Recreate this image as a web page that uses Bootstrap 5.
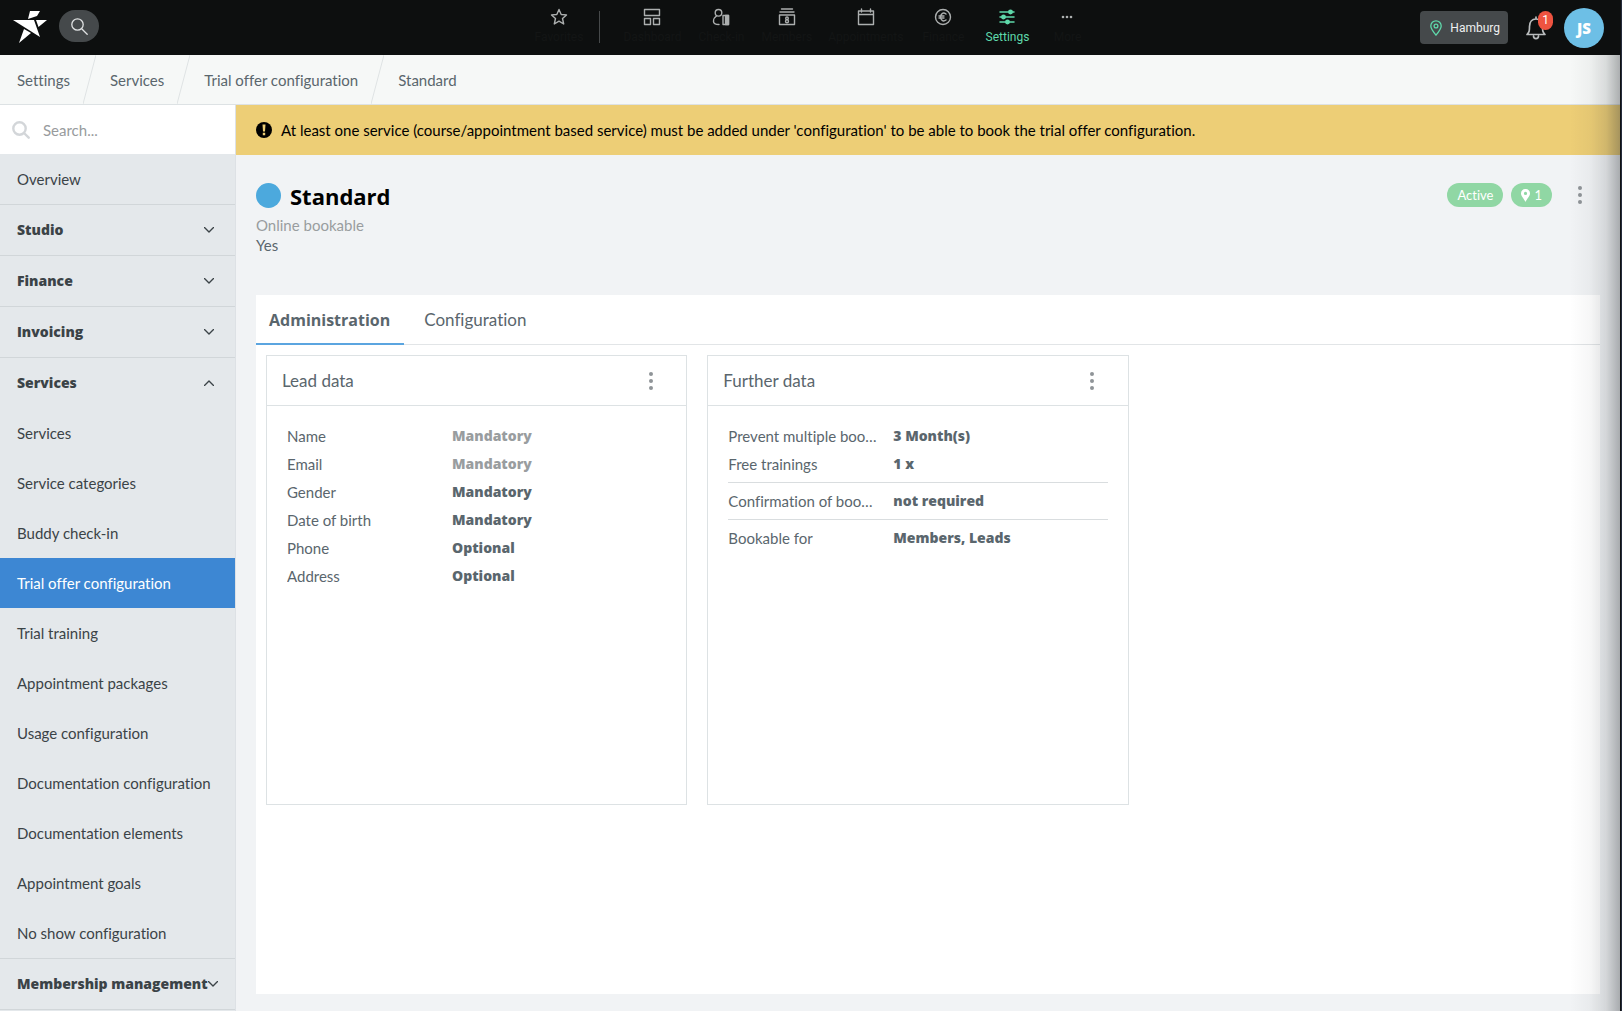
<!DOCTYPE html>
<html lang="en">
<head>
<meta charset="utf-8">
<meta name="viewport" content="width=device-width, initial-scale=1">
<title>Trial offer configuration – Standard</title>
<link href="https://cdn.jsdelivr.net/npm/bootstrap@5.3.0/dist/css/bootstrap.min.css" rel="stylesheet">
<style>
  :root { --ink: #5a666d; --line: #dde2e4; --heavy: "Open Sans", "Noto Sans", sans-serif; }
  body { font: 15px/20px Lato, "Open Sans", sans-serif; font-variant-ligatures: none; color: var(--ink); background: #f1f3f5; }
  a { color: inherit; text-decoration: none; }
  svg { display: block; flex: none; }
  button { font: inherit; color: inherit; background: none; border: 0; padding: 0; }
  .line-icon { fill: none; stroke: currentColor; stroke-linecap: round; stroke-linejoin: round; }
  .heavy { font-family: var(--heavy); font-weight: 800; font-size: 14px; }

  .topbar { display: grid; grid-template-columns: 1fr auto 1fr; height: 55px; background: #0d0f0f; font-family: Roboto, sans-serif; font-size: 12px; line-height: 16px; }
  .topbar-start { padding: 10px 0 0 13px; gap: 12px; }
  .topbar-end { padding-right: 18px; gap: 16px; }
  .search-pill { width: 40px; height: 32px; border-radius: 16px; background: #45494b; color: #dfe1e2; }
  .app-link { min-width: 64px; padding: 8px 8px 0; color: #131515; text-align: center; height: 55px; }
  .app-link svg { margin: 0 auto 3px; color: #acafaf; }
  .app-link.active, .app-link.active svg { color: #5fd9ab; }
  .app-link.more-link { min-width: 56px; }
  .app-rule { width: 1px; height: 32px; background: #46494a; margin: 11px 15px 0 8px; }
  .studio-btn { height: 33px; padding: 0 8px 0 10px; border-radius: 4px; background: #45494b; color: #eef0f0; }
  .bell-btn { color: #b9bcbd; }
  .bell-count { position: absolute; left: 14px; top: -5px; width: 15px; height: 19px; border-radius: 8px; background: #ee5340; color: #fff; line-height: 18px; }
  .avatar { width: 40px; height: 40px; border-radius: 50%; background: #6dbfe6; color: #fff; font: 800 15px/20px "Open Sans", sans-serif; }

  .crumbs { height: 50px; background: #f6f8f7; border-bottom: 1px solid var(--line); padding-left: 17px; }
  .crumbs svg { margin: 0 14px 0 13px; color: #dfe3e4; }

  .side { width: 236px; flex: none; background: #e4e8eb; border-right: 1px solid #dde1e5; color: #3b4347; }
  .side-search { height: 49px; background: #fff; padding-left: 12px; color: #d3d6d9; }
  .side-search input { border: 0; outline: 0; min-width: 0; width: 100%; padding: 0 8px 0 13px; color: var(--ink); }
  .side-search input::placeholder { color: #989b9d; opacity: 1; }
  .side-link { display: flex; align-items: center; height: 50px; padding-left: 17px; }
  .side-link.active { background: #3d87d3; color: #fff; }
  .side-group { width: 100%; height: 50px; padding: 0 21px 0 17px; white-space: nowrap; }
  .ruled { border-bottom: 1px solid #d1d6d9; }

  .notice { height: 50px; background: #edce76; color: #000; padding-left: 20px; gap: 9px; }
  .page-head { height: 140px; padding: 28px 35px 0 20px; }
  .title-row { gap: 9px; margin-bottom: 7px; }
  .color-dot { width: 25px; height: 25px; border-radius: 50%; background: #4ca9dd; }
  .page-title { font: 700 22px/24px var(--heavy); color: #000; margin: 0; }
  .hint { color: #999d9f; }
  .pill { height: 24px; border-radius: 12px; background: #90d7a4; color: #fff; padding: 0 10px; font-size: 13px; }
  .dots { color: #8f9498; width: 15px; }
  .page-head .dots { margin-left: 12px; }

  .panel { background: #fff; margin: 0 22px 17px 20px; }
  .tabs { height: 50px; border-bottom: 1px solid #e2e5e7; font-size: 17px; }
  .tab { height: 50px; padding: 2px 14px 0 13px; border-bottom: 2px solid transparent; }
  .tab.active { border-color: #5ba5e0; font: 700 16px/20px var(--heavy); }
  .tab + .tab { margin-left: 7px; }
  .tile-area { padding: 10px 30px 20px 10px; }
  .tile-area .row { --bs-gutter-x: 20px; }
  .tile { border: 1px solid var(--line); height: 450px; }
  .tile-head { height: 50px; border-bottom: 1px solid var(--line); padding: 0 28px 0 15px; }
  .tile-head h2 { font-size: 17px; font-weight: 400; line-height: 24px; margin: 0; }
  .facts { padding: 16px 20px; margin: 0; }
  .fact { display: flex; align-items: center; height: 28px; gap: 15px; }
  .fact dt { flex: 0 0 150px; font-weight: 400; overflow: hidden; text-overflow: ellipsis; white-space: nowrap; }
  .fact dd { margin: 0; }
  .facts hr { margin: 4px 0; border-color: #d9dddf; opacity: 1; }

  .edge-shade { position: fixed; top: 55px; right: 2px; bottom: 0; width: 50px; pointer-events: none; background: linear-gradient(to right, rgba(40,45,50,0), rgba(40,45,50,.04) 40%, rgba(40,45,50,.14) 72%, rgba(40,45,50,.36)); }
  .edge-frame { position: fixed; top: 0; right: 0; bottom: 0; width: 2px; background: #101214; border-right: 1px solid #252c3c; pointer-events: none; }
</style>
<script src="https://cdn.jsdelivr.net/npm/bootstrap@5.3.0/dist/js/bootstrap.bundle.min.js"></script>
</head>
<body class="d-flex flex-column min-vh-100">

<header class="topbar">
  <div class="topbar-start d-flex align-items-start">
    <a href="#" aria-label="Home">
      <svg width="34" height="33" viewBox="0 -1 34 33" fill="#fff"><path d="M17 0h10l-3 5-9 3zM0 9h21l6 17zM23 9h11l-8.500 7zM11 18l7 4L6 32z"/></svg>
    </a>
    <button class="search-pill d-flex align-items-center justify-content-center" aria-label="Search">
      <svg class="line-icon" width="17" height="17" viewBox="0 0 17 17" stroke-width="1.300"><circle cx="6.500" cy="6.500" r="5.700"/><path d="M10.700 10.700l5.500 5.500"/></svg>
    </button>
  </div>
  <nav class="d-flex">
    <a class="app-link" href="#"><svg class="line-icon" width="18" height="18" viewBox="0 0 18 18" stroke-width="1.400"><path d="M9 1.500l2.200 5 5.300.4-4 3.600 1.200 5.500L9 13.200 4.300 16l1.200-5.500-4-3.600 5.300-.4z"/></svg>Favorites</a>
    <div class="app-rule"></div>
    <a class="app-link" href="#"><svg class="line-icon" width="18" height="18" viewBox="0 0 18 18" stroke-width="1.400"><path d="M1.500 1.500h15v6h-15zM1.500 10.500h6v6h-6zM10.500 10.500h6v6h-6z"/></svg>Dashboard</a>
    <a class="app-link" href="#"><svg class="line-icon" width="18" height="18" viewBox="0 0 18 18" stroke-width="1.400"><circle cx="6.500" cy="4.800" r="3.300"/><path d="M4.500 8C2 9.500 1.500 11 1.500 13.500c0 2 1.500 3 5.500 3M11 7.500h5.500v9H11z"/><path d="M13.500 7.500h3v9h-3z" fill="currentColor"/></svg>Check-in</a>
    <a class="app-link" href="#"><svg class="line-icon" width="18" height="18" viewBox="0 0 18 18" stroke-width="1.400"><path d="M3.500 1h11M2 4h14M1.500 7h15v9.500h-15z"/><circle cx="9" cy="10.300" r="1.300"/><circle cx="9" cy="13.300" r="1.500"/></svg>Members</a>
    <a class="app-link" href="#"><svg class="line-icon" width="18" height="18" viewBox="0 0 18 18" stroke-width="1.400"><path d="M1.500 3h15v13.500h-15zM1.500 6.500h15M4.500 1v3M13.500 1v3"/></svg>Appointments</a>
    <a class="app-link" href="#"><svg class="line-icon" width="18" height="18" viewBox="0 0 18 18" stroke-width="1.400"><circle cx="9" cy="9" r="7.500"/><path d="M12 6C9 3.800 6.500 6 6.500 9s2.500 5.200 5.500 3M5 8h5M5 10h5"/></svg>Finance</a>
    <a class="app-link active" href="#"><svg class="line-icon" width="18" height="18" viewBox="0 0 18 18" stroke-width="1.500"><path d="M2 4h14M2 9h14M2 14h14"/><g fill="currentColor"><circle cx="12.500" cy="4" r="1.700"/><circle cx="5.500" cy="9" r="1.700"/><circle cx="9.500" cy="14" r="1.700"/></g></svg>Settings</a>
    <a class="app-link more-link" href="#"><svg width="18" height="18" viewBox="0 0 18 18" fill="currentColor"><circle cx="5" cy="9" r="1.300"/><circle cx="9" cy="9" r="1.300"/><circle cx="13" cy="9" r="1.300"/></svg>More</a>
  </nav>
  <div class="topbar-end d-flex align-items-center justify-content-end">
    <button class="studio-btn d-flex align-items-center gap-2">
      <svg class="line-icon" width="12" height="16" viewBox="0 0 12 16" stroke-width="1.300"><g stroke="#5fd9ab"><path d="M6 15.200C3 11.500.8 8.500.8 6a5.200 5.200 0 0 1 10.400 0c0 2.500-2.200 5.500-5.200 9.200z"/><circle cx="6" cy="6" r="1.900"/></g></svg>Hamburg
    </button>
    <button class="bell-btn position-relative" aria-label="Notifications">
      <svg class="line-icon" width="24" height="24" viewBox="0 0 24 24" stroke-width="1.700"><path d="M12 2.500V1M3 18.500c2.500-2.500 2.500-4 2.500-8C5.500 6 8 3 12 3s6.500 3 6.500 7.500c0 4 0 5.500 2.500 8zM9.500 20c0 3.500 5 3.500 5 0"/></svg>
      <span class="bell-count">1</span>
    </button>
    <button class="avatar" aria-label="Account">JS</button>
  </div>
</header>

<nav class="crumbs d-flex align-items-center" aria-label="Breadcrumb">
  <a href="#">Settings</a>
  <svg class="line-icon" width="13" height="49" viewBox="0 0 13 49"><path d="M13 0L0 49"/></svg>
  <a href="#">Services</a>
  <svg class="line-icon" width="13" height="49" viewBox="0 0 13 49"><path d="M13 0L0 49"/></svg>
  <a href="#">Trial offer configuration</a>
  <svg class="line-icon" width="13" height="49" viewBox="0 0 13 49"><path d="M13 0L0 49"/></svg>
  <a href="#" aria-current="page">Standard</a>
</nav>

<div class="d-flex flex-grow-1">
  <aside class="side">
    <label class="side-search d-flex align-items-center">
      <svg class="line-icon" width="18" height="18" viewBox="0 0 18 18" stroke-width="2.400"><circle cx="7.500" cy="7.500" r="6.200"/><path d="M12.500 12.500l4.200 4.200"/></svg>
      <input type="text" placeholder="Search..." aria-label="Search settings">
    </label>
    <nav>
      <div class="ruled"><a class="side-link" href="#">Overview</a></div>
      <div class="ruled"><button class="side-group heavy d-flex align-items-center justify-content-between">Studio<svg class="line-icon" width="10" height="6" viewBox="0 0 10 6" stroke-width="1.400"><path d="M.5.5L5 5 9.500.5"/></svg></button></div>
      <div class="ruled"><button class="side-group heavy d-flex align-items-center justify-content-between">Finance<svg class="line-icon" width="10" height="6" viewBox="0 0 10 6" stroke-width="1.400"><path d="M.5.5L5 5 9.500.5"/></svg></button></div>
      <div class="ruled"><button class="side-group heavy d-flex align-items-center justify-content-between">Invoicing<svg class="line-icon" width="10" height="6" viewBox="0 0 10 6" stroke-width="1.400"><path d="M.5.5L5 5 9.500.5"/></svg></button></div>
      <div class="ruled">
        <button class="side-group heavy d-flex align-items-center justify-content-between" aria-expanded="true">Services<svg class="line-icon" width="10" height="6" viewBox="0 0 10 6" stroke-width="1.400"><path d="M.5 5.500L5 1l4.500 4.500"/></svg></button>
        <a class="side-link" href="#">Services</a>
        <a class="side-link" href="#">Service categories</a>
        <a class="side-link" href="#">Buddy check-in</a>
        <a class="side-link active" href="#">Trial offer configuration</a>
        <a class="side-link" href="#">Trial training</a>
        <a class="side-link" href="#">Appointment packages</a>
        <a class="side-link" href="#">Usage configuration</a>
        <a class="side-link" href="#">Documentation configuration</a>
        <a class="side-link" href="#">Documentation elements</a>
        <a class="side-link" href="#">Appointment goals</a>
        <a class="side-link" href="#">No show configuration</a>
      </div>
      <div class="ruled"><button class="side-group heavy d-flex align-items-center justify-content-between">Membership management<svg class="line-icon" width="10" height="6" viewBox="0 0 10 6" stroke-width="1.400"><path d="M.5.5L5 5 9.500.5"/></svg></button></div>
    </nav>
  </aside>

  <main class="d-flex flex-column flex-grow-1">
    <div class="notice d-flex align-items-center" role="alert">
      <svg width="16" height="16" viewBox="0 0 16 16"><circle cx="8" cy="8" r="8"/><path fill="#edce76" d="M6.500 2.500h3L9 9.500H7zM6.800 10.800h2.400v2.400H6.800z"/></svg>
      <span>At least one service (course/appointment based service) must be added under 'configuration' to be able to book the trial offer configuration.</span>
    </div>

    <section class="page-head d-flex justify-content-between align-items-start">
      <div>
        <div class="title-row d-flex align-items-center"><span class="color-dot"></span><h1 class="page-title">Standard</h1></div>
        <div class="hint">Online bookable</div>
        <div>Yes</div>
      </div>
      <div class="d-flex align-items-center gap-2">
        <span class="pill d-flex align-items-center">Active</span>
        <span class="pill d-flex align-items-center gap-1"><svg width="9" height="13" viewBox="0 0 9 13" fill="#fff"><path fill-rule="evenodd" d="M4.500 0A4.300 4.300 0 0 1 9 4.400C9 7 6 9.500 4.500 13 3 9.500 0 7 0 4.400A4.300 4.300 0 0 1 4.500 0zm0 2.800a1.600 1.600 0 1 0 0 3.200 1.600 1.600 0 0 0 0-3.200z"/></svg>1</span>
        <button class="dots d-flex justify-content-center" aria-label="More actions"><svg width="4" height="18" viewBox="0 0 4 18" fill="currentColor"><circle cx="2" cy="2" r="2"/><circle cx="2" cy="9" r="2"/><circle cx="2" cy="16" r="2"/></svg></button>
      </div>
    </section>

    <section class="panel flex-grow-1">
      <div class="tabs d-flex" role="tablist">
        <button class="tab active" role="tab" aria-selected="true">Administration</button>
        <button class="tab" role="tab" aria-selected="false">Configuration</button>
      </div>
      <div class="tile-area">
        <div class="row">
          <div class="col-4">
            <article class="tile">
              <div class="tile-head d-flex align-items-center justify-content-between"><h2>Lead data</h2>
                <button class="dots d-flex justify-content-center" aria-label="Lead data actions"><svg width="4" height="18" viewBox="0 0 4 18" fill="currentColor"><circle cx="2" cy="2" r="2"/><circle cx="2" cy="9" r="2"/><circle cx="2" cy="16" r="2"/></svg></button></div>
              <dl class="facts">
                <div class="fact"><dt>Name</dt><dd class="heavy hint">Mandatory</dd></div>
                <div class="fact"><dt>Email</dt><dd class="heavy hint">Mandatory</dd></div>
                <div class="fact"><dt>Gender</dt><dd class="heavy">Mandatory</dd></div>
                <div class="fact"><dt>Date of birth</dt><dd class="heavy">Mandatory</dd></div>
                <div class="fact"><dt>Phone</dt><dd class="heavy">Optional</dd></div>
                <div class="fact"><dt>Address</dt><dd class="heavy">Optional</dd></div>
              </dl>
            </article>
          </div>
          <div class="col-4">
            <article class="tile">
              <div class="tile-head d-flex align-items-center justify-content-between"><h2>Further data</h2>
                <button class="dots d-flex justify-content-center" aria-label="Further data actions"><svg width="4" height="18" viewBox="0 0 4 18" fill="currentColor"><circle cx="2" cy="2" r="2"/><circle cx="2" cy="9" r="2"/><circle cx="2" cy="16" r="2"/></svg></button></div>
              <dl class="facts">
                <div class="fact"><dt>Prevent multiple boo…</dt><dd class="heavy">3 Month(s)</dd></div>
                <div class="fact"><dt>Free trainings</dt><dd class="heavy">1 x</dd></div>
                <hr>
                <div class="fact"><dt>Confirmation of boo…</dt><dd class="heavy">not required</dd></div>
                <hr>
                <div class="fact"><dt>Bookable for</dt><dd class="heavy">Members, Leads</dd></div>
              </dl>
            </article>
          </div>
        </div>
      </div>
    </section>
  </main>
</div>
<div class="edge-shade"></div>
<div class="edge-frame"></div>
</body>
</html>
